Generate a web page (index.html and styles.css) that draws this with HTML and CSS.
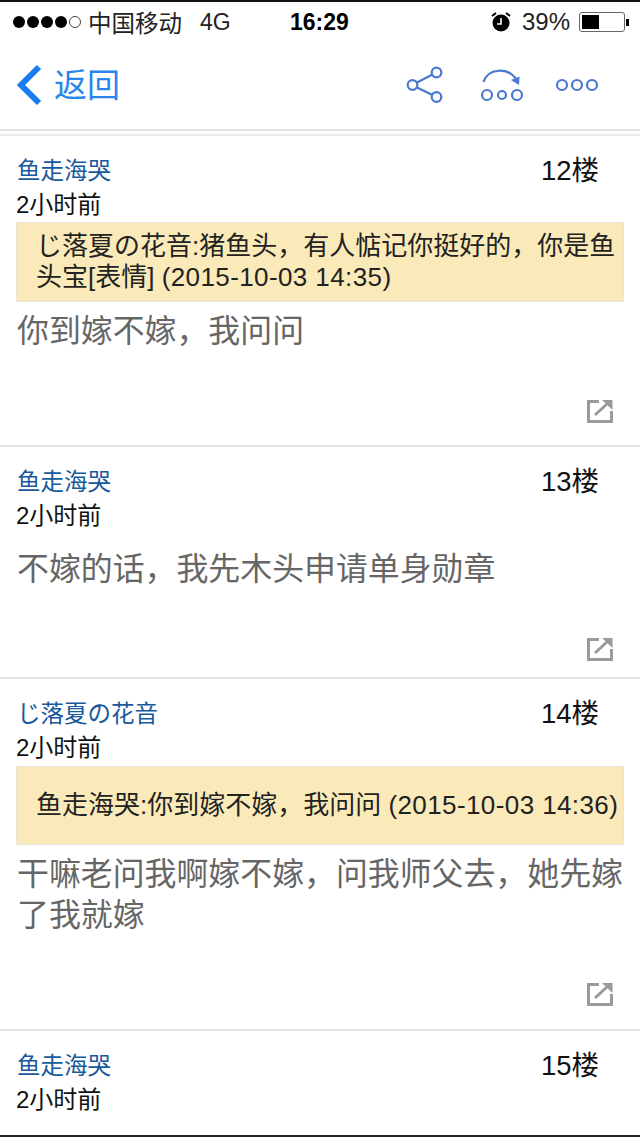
FILE: index.html
```html
<!DOCTYPE html>
<html lang="zh-CN">
  <head>
    <meta charset="UTF-8" />
    <meta name="viewport" content="width=device-width, initial-scale=1.0" />
    <title>回复</title>
    <link rel="stylesheet" href="styles.css">
  </head>
  <body>
    <div class="status-bar">
      <div class="status-left">
        <span class="signal"><i></i><i></i><i></i><i></i><i class="off"></i></span>
        <span class="carrier">中国移动</span>
        <span class="network">4G</span>
      </div>
      <div class="clock">16:29</div>
      <div class="status-right">
        <svg class="alarm" width="22" height="20" viewBox="0 0 22 20">
          <circle cx="11" cy="11" r="8.5" fill="#000" />
          <path d="M2 4 L6 1 M20 4 L16 1" stroke="#000" stroke-width="2" />
          <path d="M11 6 V12 H7" stroke="#fff" stroke-width="1.6" fill="none" />
        </svg>
        <span class="percent">39%</span>
        <span class="battery"><span class="battery-level"></span></span>
        <span class="battery-tip"></span>
      </div>
    </div>

    <div class="nav-bar">
      <a class="back">
        <svg width="28" height="44" viewBox="0 0 28 44">
          <path d="M24 4 L6 22 L24 40" fill="none" stroke="#1a7cf0" stroke-width="6" />
        </svg>
        <span class="back-label">返回</span>
      </a>
      <div class="nav-actions">
        <svg class="share-icon" width="38" height="38" viewBox="0 0 38 38">
          <g fill="none" stroke="#4a78d0" stroke-width="2.2">
            <circle cx="6.500" cy="19" r="4.800" />
            <circle cx="30.500" cy="6.500" r="4.800" />
            <circle cx="30.500" cy="31" r="4.800" />
            <path d="M11 16.500 L26 8.800 M11 21.500 L26 28.800" />
          </g>
        </svg>
        <svg class="jump-icon" width="44" height="36" viewBox="0 0 44 36">
          <g fill="none" stroke="#4a78d0" stroke-width="2.2">
            <circle cx="7" cy="28" r="5" />
            <circle cx="22" cy="28" r="4" />
            <circle cx="37" cy="28" r="5" />
            <path d="M3.500 15 C8 1 28 0 36 12" />
          </g>
          <path d="M31 13 L39.500 9.500 L39 18 Z" fill="#4a78d0" />
        </svg>
        <svg class="more-icon" width="44" height="14" viewBox="0 0 44 14">
          <g fill="none" stroke="#4a78d0" stroke-width="2.2">
            <circle cx="7" cy="7" r="5" />
            <circle cx="22" cy="7" r="5" />
            <circle cx="37" cy="7" r="5" />
          </g>
        </svg>
      </div>
    </div>
    <div class="nav-gap"></div>

    <div class="post post-12">
      <div class="post-head">
        <div class="post-name">鱼走海哭</div>
        <div class="post-floor">12楼</div>
      </div>
      <div class="post-time">2小时前</div>
      <div class="quote">
        <div class="quote-line">じ落夏の花音:猪鱼头，有人惦记你挺好的，你是鱼</div>
        <div class="quote-line">头宝[表情] <span class="quote-date">(2015-10-03 14:35)</span></div>
      </div>
      <div class="post-body">你到嫁不嫁，我问问</div>
      <div class="post-foot">
        <svg class="open-icon" width="26" height="24" viewBox="0 0 26 24"><use href="#open" /></svg>
      </div>
    </div>

    <div class="post post-13">
      <div class="post-head">
        <div class="post-name">鱼走海哭</div>
        <div class="post-floor">13楼</div>
      </div>
      <div class="post-time">2小时前</div>
      <div class="post-body">不嫁的话，我先木头申请单身勋章</div>
      <div class="post-foot">
        <svg class="open-icon" width="26" height="24" viewBox="0 0 26 24"><use href="#open" /></svg>
      </div>
    </div>

    <div class="post post-14">
      <div class="post-head">
        <div class="post-name">じ落夏の花音</div>
        <div class="post-floor">14楼</div>
      </div>
      <div class="post-time">2小时前</div>
      <div class="quote quote-single">鱼走海哭:你到嫁不嫁，我问问&nbsp;<span class="quote-date">(2015-10-03 14:36)</span></div>
      <div class="post-body">干嘛老问我啊嫁不嫁，问我师父去，她先嫁了我就嫁</div>
      <div class="post-foot">
        <svg class="open-icon" width="26" height="24" viewBox="0 0 26 24"><use href="#open" /></svg>
      </div>
    </div>

    <div class="post post-15">
      <div class="post-head">
        <div class="post-name">鱼走海哭</div>
        <div class="post-floor">15楼</div>
      </div>
      <div class="post-time">2小时前</div>
    </div>

    <svg class="icon-defs" width="0" height="0">
      <symbol id="open" viewBox="0 0 26 24">
        <g fill="none" stroke="#9a9a9a" stroke-width="3">
          <path d="M12 2.500 H1.500 V22.500 H24.500 V12" />
          <path d="M8 16 L21 4" />
        </g>
        <path d="M15 1 H25.500 V11 Z" fill="#9a9a9a" />
      </symbol>
    </svg>
  </body>
</html>
```

FILE: styles.css
```css
* {
  box-sizing: border-box;
}

html,
body {
  margin: 0;
  height: 1137px;
  overflow: hidden;
}

body {
  font-family: "Liberation Sans", "Noto Sans CJK SC", sans-serif;
  background-color: #ffffff;
  color: #111111;
  border-top: 2px solid #111111;
  border-bottom: 2px solid #222222;
}

.status-bar {
  position: relative;
  display: flex;
  justify-content: space-between;
  align-items: center;
  height: 40px;
  padding: 0 11px 0 13px;
  font-size: 23.500px;
  color: #222222;
}

.status-left,
.status-right {
  display: flex;
  align-items: center;
}

.signal {
  display: flex;
  gap: 2px;
  margin-right: 7px;
}

.signal i {
  width: 12px;
  height: 12px;
  border-radius: 50%;
  background-color: #000000;
}

.signal i.off {
  width: 12px;
  height: 12px;
  background-color: transparent;
  border: 1px solid #444444;
}

.network {
  margin-left: 18px;
  font-size: 23px;
}

.clock {
  position: absolute;
  left: 290px;
  top: 7px;
  font-weight: bold;
  font-size: 23px;
  color: #000000;
}

.alarm {
  margin-right: 10px;
}

.percent {
  font-size: 24px;
  margin-right: 9px;
}

.battery {
  display: block;
  width: 46px;
  height: 20px;
  padding: 2px;
  border: 1px solid #666666;
  border-radius: 3px;
}

.battery-level {
  display: block;
  width: 17px;
  height: 100%;
  background-color: #000000;
}

.battery-tip {
  width: 3px;
  height: 7px;
  margin-left: 1px;
  background-color: #000000;
}

.nav-bar {
  display: flex;
  justify-content: space-between;
  align-items: center;
  height: 87px;
  padding: 0 41px 2px 15px;
}

.back {
  display: flex;
  align-items: center;
  gap: 11px;
  font-size: 33px;
  color: #2a85ec;
}

.back-label {
  padding-bottom: 4px;
}

.nav-actions {
  display: flex;
  align-items: center;
}

.share-icon {
  margin-right: 36px;
}

.jump-icon {
  margin: 1px 30px 0 0;
}

.more-icon {
  margin-left: 1px;
}

.nav-gap {
  height: 7px;
  border-top: 2px solid #e4e4e4;
  border-bottom: 2px solid #ececec;
}

.post {
  padding: 0 16px;
  border-bottom: 2px solid #e6e6e6;
}

.post-12 {
  height: 311px;
}

.post-13 {
  height: 232px;
}

.post-14 {
  height: 352px;
}

.post-15 {
  border-bottom: none;
}

.post-head {
  display: flex;
  justify-content: space-between;
  align-items: center;
  height: 50px;
  padding: 15px 25px 0 1px;
}

.post-name {
  font-size: 23.500px;
  color: #17599c;
}

.post-floor {
  margin-top: -2px;
  font-size: 27.500px;
  color: #111111;
}

.post-time {
  font-size: 24px;
  line-height: 38px;
  height: 36px;
}

.quote {
  width: 608px;
  height: 80px;
  padding: 8px 6px 0 19px;
  font-size: 26px;
  line-height: 31px;
  color: #222222;
  background-color: #fbeab9;
  border: 1px solid #e8e4d8;
}

.quote-line {
  white-space: nowrap;
}

.quote-date {
  letter-spacing: 0.4px;
}

.quote-single {
  display: flex;
  align-items: center;
  white-space: nowrap;
  height: 79px;
  margin-top: 1px;
  padding: 0 0 0 19px;
}

.post-body {
  margin-right: -16px;
  padding: 9px 0 0 1px;
  font-size: 31.900px;
  line-height: 40px;
  color: #666666;
}

.post-13 .post-body {
  padding-top: 16px;
}

.post-14 .post-body {
  line-height: 41px;
}

.post-foot {
  display: flex;
  justify-content: flex-end;
  padding-right: 11px;
}

.post-12 .post-foot {
  margin-top: 48px;
}

.post-13 .post-foot {
  margin-top: 48px;
}

.post-14 .post-foot {
  margin-top: 46px;
}

.icon-defs {
  position: absolute;
}
```
